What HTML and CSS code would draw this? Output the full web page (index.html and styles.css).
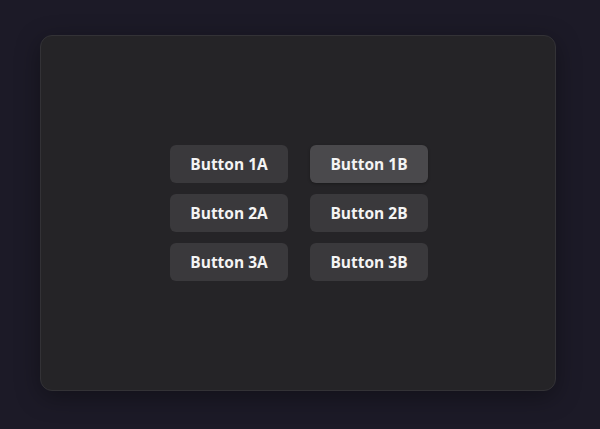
FILE: index.html
```html
<!DOCTYPE html>
<html lang="en">
<head>
    <meta charset="UTF-8">
    <meta name="viewport" content="width=device-width, initial-scale=1.0">
    <title>Button Grid</title>
    <link rel="stylesheet" href="styles.css">
</head>
<body>
    <div class="panel">
        <div class="button-grid">
            <button class="btn">Button 1A</button>
            <button class="btn active">Button 1B</button>
            <button class="btn">Button 2A</button>
            <button class="btn">Button 2B</button>
            <button class="btn">Button 3A</button>
            <button class="btn">Button 3B</button>
        </div>
    </div>
</body>
</html>
```

FILE: styles.css
```css
* {
    margin: 0;
    padding: 0;
    box-sizing: border-box;
}

html, body {
    height: 100%;
}

body {
    font-family: "Open Sans", "Noto Sans", sans-serif;
    background: #1c1a27;
    padding: 35px 44px 38px 40px;
}

.panel {
    height: 100%;
    background: #252427;
    border: 1px solid #333236;
    border-radius: 12px;
    box-shadow: 0 6px 24px rgba(0, 0, 0, 0.35);
    display: flex;
    align-items: center;
    justify-content: center;
}

.button-grid {
    display: grid;
    grid-template-columns: 118px 118px;
    column-gap: 22px;
    row-gap: 11px;
    margin-left: 2px;
}

.btn {
    height: 38px;
    background: #3a393c;
    color: #f4f4f4;
    border: none;
    border-radius: 6px;
    font-family: inherit;
    font-size: 15.5px;
    font-weight: 700;
    cursor: pointer;
}

.btn.active,
.btn:hover {
    background: #4a494c;
    box-shadow: 0 1px 3px rgba(0, 0, 0, 0.3);
}
```
